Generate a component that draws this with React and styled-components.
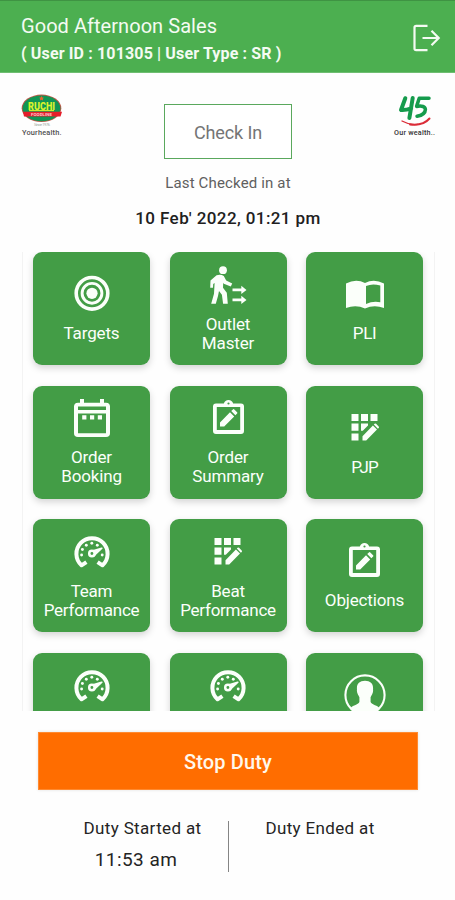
import React from "react";
import styled, { createGlobalStyle } from "styled-components";

const GlobalStyle = createGlobalStyle`
  * { box-sizing: border-box; }
  body { margin: 0; background: #fefefe; font-family: Roboto, sans-serif; }
  svg { display: block; overflow: visible; }
`;

const Screen = styled.div`
  width: 455px;
  height: 900px;
  display: flex;
  flex-direction: column;
  overflow: hidden;
  background: #fefefe;
`;

const Header = styled.header`
  height: 73px;
  flex: none;
  display: flex;
  align-items: center;
  justify-content: space-between;
  padding: 3px 14px 0 21px;
  background: #4caf50;
  border-top: 1px solid #3f9343;
  border-bottom: 1px solid #6fbe72;
  color: #f4fbf2;
`;

const Identity = styled.div`
  padding-top: 3px;
`;

const Greeting = styled.div`
  font-size: 20px;
  line-height: 26px;
  letter-spacing: 0.05px;
  white-space: nowrap;
`;

const UserLine = styled.div`
  margin-top: 1px;
  font-size: 16px;
  line-height: 27px;
  font-weight: 700;
  letter-spacing: 0.14px;
  white-space: nowrap;
`;

const CheckSection = styled.section`
  height: 179px;
  flex: none;
  display: grid;
  grid-template-columns: 42px 1fr 42px;
  padding: 20px 20px 0;
`;

const CheckColumn = styled.div`
  display: flex;
  flex-direction: column;
  align-items: center;
  padding: 11px 0 0 1px;
`;

const CheckButton = styled.button`
  width: 128px;
  height: 55px;
  padding: 2px 0 0;
  border: 1.5px solid #5aa85d;
  background: #fff;
  color: #757575;
  font: 400 18px Roboto, sans-serif;
  letter-spacing: -0.1px;
`;

const LastLabel = styled.div`
  margin-top: 14px;
  font-size: 15px;
  line-height: 20px;
  letter-spacing: 0.15px;
  color: #606060;
`;

const LastTime = styled.div`
  margin-top: 14px;
  font-size: 17px;
  line-height: 22px;
  font-weight: 500;
  letter-spacing: 0.4px;
  color: #202020;
`;

const Panel = styled.main`
  width: 413px;
  height: 459px;
  flex: none;
  margin-left: 22px;
  padding: 0 10px;
  overflow: hidden;
  border: solid #f3f3f3;
  border-width: 0 1px;
`;

const TileGrid = styled.div`
  display: grid;
  grid-template-columns: repeat(3, 117px);
  grid-auto-rows: 113px;
  column-gap: 19.5px;
  row-gap: 20.6px;
`;

const TileButton = styled.div`
  display: flex;
  flex-direction: column;
  align-items: center;
  justify-content: center;
  border-radius: 9px;
  background: #439d46;
  box-shadow: 0 3px 7px rgba(0, 0, 0, 0.17);
  color: #fbfffa;
`;

const IconBox = styled.div`
  height: 40px;
  margin-bottom: 10px;
  display: flex;
  align-items: center;
`;

const TileLabel = styled.div`
  min-height: ${(p) => p.$lines * 19}px;
  font-size: 17px;
  line-height: 19px;
  letter-spacing: ${(p) => p.$spacing || "-0.15px"};
  text-align: center;
  white-space: pre-line;
`;

const StopButton = styled.button`
  width: 380px;
  height: 58px;
  flex: none;
  margin: 21px 0 0 38px;
  padding: 2px 0 0;
  border: 1px solid #ff8a30;
  background: #ff6d00;
  color: #fff8ec;
  font: 500 20px Roboto, sans-serif;
  letter-spacing: 0.15px;
  box-shadow: 0 0 3px rgba(0, 0, 0, 0.12);
`;

const DutyRow = styled.footer`
  display: grid;
  grid-template-columns: 171px 1px 182px;
  margin: 28px 0 0 57px;
`;

const DutyColumn = styled.div`
  display: flex;
  flex-direction: column;
  align-items: center;
  color: #242424;
`;

const DutyLabel = styled.div`
  font-size: 17px;
  line-height: 20px;
  letter-spacing: 0.35px;
`;

const DutyTime = styled.div`
  margin-top: 11px;
  padding-right: 13px;
  font-size: 19px;
  line-height: 22px;
  letter-spacing: 0.45px;
`;

const Divider = styled.div`
  height: 51px;
  margin-top: 3px;
  background: #858585;
`;

const LogoutIcon = () => (
  <svg width="28" height="29" viewBox="0 0 28 29" fill="none" stroke="currentColor" strokeWidth="2.2">
    <path d="M14.5 1.8H3.2Q1.5 1.8 1.5 3.5v21q0 1.7 1.7 1.7h11.3M9.5 14H26M18.5 6.8l7.2 7.2-7.2 7.2" />
  </svg>
);

const HealthLogo = () => (
  <svg width="44" height="44" viewBox="0 0 44 44">
    <ellipse cx="21.5" cy="15.3" rx="19.8" ry="13.7" fill="#bf5748" />
    <ellipse cx="21.5" cy="15.3" rx="18.9" ry="12.9" fill="#119554" />
    <path d="m21.5 3 .9 1.5 1.6.2-1.2 1.1.3 1.7-1.6-.8-1.6.8.3-1.7L19 4.7l1.6-.2z" fill="#e6652f" />
    <text x="8" y="16.5" fontFamily="Roboto" fontWeight="900" fontSize="10.5" textLength="27" lengthAdjust="spacingAndGlyphs" fill="#d9f22d">RUCHI</text>
    <path d="M9 17.6h25" stroke="#d9f22d" strokeWidth="1.1" />
    <path d="M3 18.8h39l-1.5 4.7H4z" fill="#e51d2a" />
    <text x="11" y="22.7" fontFamily="Roboto" fontWeight="700" fontSize="4.2" textLength="21" lengthAdjust="spacingAndGlyphs" fill="#ffc9c9">FOODLINE</text>
    <text x="14" y="32.5" fontFamily="Roboto" fontSize="4" textLength="16" fill="#9aa79c">Since 1976</text>
    <text x="2" y="41.6" fontFamily="Roboto" fontWeight="500" fontSize="7.4" textLength="39.5" fill="#4f4f4f">Yourhealth.</text>
  </svg>
);

const WealthLogo = () => (
  <svg width="42" height="44" viewBox="0 0 42 44">
    <g fill="none" strokeLinecap="round" strokeLinejoin="round">
      <path d="M12.3 5.2 8 17q4.6.4 10.2-1.6M19.7 5l-3.3 20" stroke="#159b4c" strokeWidth="4" />
      <path d="M36 5.2H26.2l-2.6 8.2q8.4-1.3 8.8 3-.1 5.4-8.4 6.9" stroke="#159b4c" strokeWidth="3.5" />
      <path d="M9 28Q17 32.5 25 31.4" stroke="#db2c38" strokeWidth="1.3" />
      <path d="M17 31.4Q30 33 36.5 25.5" stroke="#db2c38" strokeWidth="2" />
    </g>
    <text x="1" y="41.7" fontFamily="Roboto" fontWeight="500" fontSize="7.2" textLength="41" fill="#333">Our wealth..</text>
  </svg>
);

const TargetIcon = () => (
  <svg width="36" height="36" viewBox="0 0 36 36" fill="none" stroke="currentColor">
    <circle cx="18" cy="17.3" r="15.8" strokeWidth="3.6" />
    <circle cx="18" cy="17.3" r="9.9" strokeWidth="2.9" />
    <circle cx="18" cy="17.3" r="5.6" fill="currentColor" stroke="none" />
  </svg>
);

const WalkIcon = () => (
  <svg width="36" height="38" viewBox="0 0 36 38" fill="currentColor">
    <circle cx="13" cy="4.2" r="3.9" />
    <path d="M6.6 9.3Q10.7 7.8 13.8 10l2.4 4.5 6 3-1.4 3-7-2.8-.6-1-.2 5 3.8 5.1 1 10.9h-4.7l-1.2-9-2.9-3.8-1 5-2.2 7.8H1.2l2.8-10 .6-10.8-1.4 1.1L3 21.8H.2l.3-7.4z" />
    <path d="M22.5 22.5h8.8v-2.7l5.2 4.1-5.2 4.1v-2.7h-8.8zm0 10h8.8v-2.7l5.2 4.1-5.2 4.1v-2.7h-8.8z" />
  </svg>
);

const BookIcon = () => (
  <svg width="38" height="28" viewBox="0 0 38 28" fill="currentColor" fillRule="evenodd">
    <path d="M0 3.5Q10-1.8 19 3q9-4.8 19 .5v24.5q-10-3.7-19 .5-9-4.2-19-.5zM20 6v18q7-3.2 14.3-1.7V5.6Q26.5 3 20 6z" />
  </svg>
);

const CalendarIcon = () => (
  <svg width="36" height="38" viewBox="3 2 18 20" preserveAspectRatio="none" fill="currentColor" fillRule="evenodd">
    <path d="M5 4h1V2h2v2h8V2h2v2h1q2 0 2 2v14q0 2-2 2H5q-2 0-2-2V6q0-2 2-2zm0 2v1.8h14V6zm0 3.6v10.4h14V9.6zm2.1 1h2.1v2.2H7.1zm3.9 0h2.1v2.2H11zm3.9 0H17v2.2h-2.1z" />
  </svg>
);

const ClipboardIcon = () => (
  <svg width="31" height="36" viewBox="0 0 31 36">
    <path fill="currentColor" fillRule="evenodd" d="M3 3.5h7.8Q12 0 15.5 0t4.7 3.5H28q3 0 3 3V31q0 3-3 3H3q-3 0-3-3V6.5q0-3 3-3zM3.8 7v23h23.4V7zm10.6-3.5a1.1 1.1 0 1 0 2.2 0 1.1 1.1 0 1 0-2.2 0z" />
    <path d="m7 22.4 10-10.1 4.2 4.2L11.2 26.6H7zm11.2-11.3 1.7-1.7q.7-.7 1.4 0l2.8 2.8q.7.7 0 1.4l-1.7 1.7z" fill="currentColor" />
  </svg>
);

const gaugeDots = [[7.6, 20], [8.4, 14.5], [12.3, 10.2], [17.8, 8.2], [23.3, 10.2], [28.2, 20]];

const GaugeIcon = () => (
  <svg width="36" height="33" viewBox="0 0 36 33" fill="none" stroke="currentColor">
    <path d="m12.4 27.1-4.9 3.2A15.6 15.6 0 1 1 28.5 30.3l-4.9-3.2" strokeWidth="4" strokeLinejoin="round" />
    {gaugeDots.map(([cx, cy]) => (
      <circle key={cx} cx={cx} cy={cy} r="1.45" fill="currentColor" stroke="none" />
    ))}
    <path d="m16.4 15.7 11-3.2q1.8-.1 1 1.3l-8.2 7.8z" fill="currentColor" stroke="none" />
    <circle cx="17.9" cy="18.5" r="2.7" fill="#439d46" strokeWidth="2.5" />
  </svg>
);

const ProfileIcon = () => (
  <svg width="42" height="42" viewBox="0 0 42 42">
    <circle cx="21" cy="21" r="19.6" fill="none" stroke="currentColor" strokeWidth="2.1" />
    <path d="M21 6.8c5.8 0 8.6 3.4 8 8.8.6 3.2-1.4 5.4-2.4 7.7v4.6c1.2 3.1 7.4 3 9.2 6.8A20 20 0 0 1 21 41 20 20 0 0 1 6.2 34.7c1.8-3.8 8-3.7 9.2-6.8v-4.6c-1-2.3-3-4.5-2.4-7.7-.6-5.4 2.2-8.8 8-8.8z" fill="currentColor" />
  </svg>
);

const GridEditIcon = () => (
  <svg width="28" height="28" viewBox="0 0 28 28" fill="currentColor">
    <path d="M.5 0h7v7h-7zM10 0h7v7h-7zM19.5 0h7v7h-7zM.5 9.6h7v7.2h-7zM10 9.6h7v1.8l-5.2 5.4H10zM.5 19.4h7v7h-7z" />
    <path d="M11.5 22.3 21.9 11.5l4.1 4.1-10.8 10.9h-3.7zM22.8 10.6l.8-.8q.7-.7 1.5 0l2.6 2.6q.7.8 0 1.5l-.8.8z" />
  </svg>
);

const tiles = [
  { id: "targets", label: "Targets", Icon: TargetIcon },
  { id: "outlet", label: "Outlet\nMaster", Icon: WalkIcon, lines: 2 },
  { id: "pli", label: "PLI", Icon: BookIcon, spacing: "-0.4px" },
  { id: "booking", label: "Order\nBooking", Icon: CalendarIcon, lines: 2 },
  { id: "summary", label: "Order\nSummary", Icon: ClipboardIcon, lines: 2 },
  { id: "pjp", label: "PJP", Icon: GridEditIcon, spacing: "-0.9px" },
  { id: "team", label: "Team\nPerformance", Icon: GaugeIcon, lines: 2, spacing: "-0.25px" },
  { id: "beat", label: "Beat\nPerformance", Icon: GridEditIcon, lines: 2, spacing: "-0.25px" },
  { id: "objections", label: "Objections", Icon: ClipboardIcon },
  { id: "gauge-a", Icon: GaugeIcon, lines: 2 },
  { id: "gauge-b", Icon: GaugeIcon, lines: 2 },
  { id: "profile", Icon: ProfileIcon },
];

const Tile = ({ label, Icon, spacing, lines = 1 }) => (
  <TileButton>
    <IconBox><Icon /></IconBox>
    <TileLabel $spacing={spacing} $lines={lines}>{label}</TileLabel>
  </TileButton>
);

export default function App() {
  return (
    <Screen>
      <GlobalStyle />
      <Header>
        <Identity>
          <Greeting>Good Afternoon Sales</Greeting>
          <UserLine>( User ID : 101305 | User Type : SR )</UserLine>
        </Identity>
        <LogoutIcon />
      </Header>
      <CheckSection>
        <HealthLogo />
        <CheckColumn>
          <CheckButton>Check In</CheckButton>
          <LastLabel>Last Checked in at</LastLabel>
          <LastTime>10 Feb' 2022, 01:21 pm</LastTime>
        </CheckColumn>
        <WealthLogo />
      </CheckSection>
      <Panel>
        <TileGrid>
          {tiles.map((tile) => <Tile key={tile.id} {...tile} />)}
        </TileGrid>
      </Panel>
      <StopButton>Stop Duty</StopButton>
      <DutyRow>
        <DutyColumn>
          <DutyLabel>Duty Started at</DutyLabel>
          <DutyTime>11:53 am</DutyTime>
        </DutyColumn>
        <Divider />
        <DutyColumn>
          <DutyLabel>Duty Ended at</DutyLabel>
        </DutyColumn>
      </DutyRow>
    </Screen>
  );
}
